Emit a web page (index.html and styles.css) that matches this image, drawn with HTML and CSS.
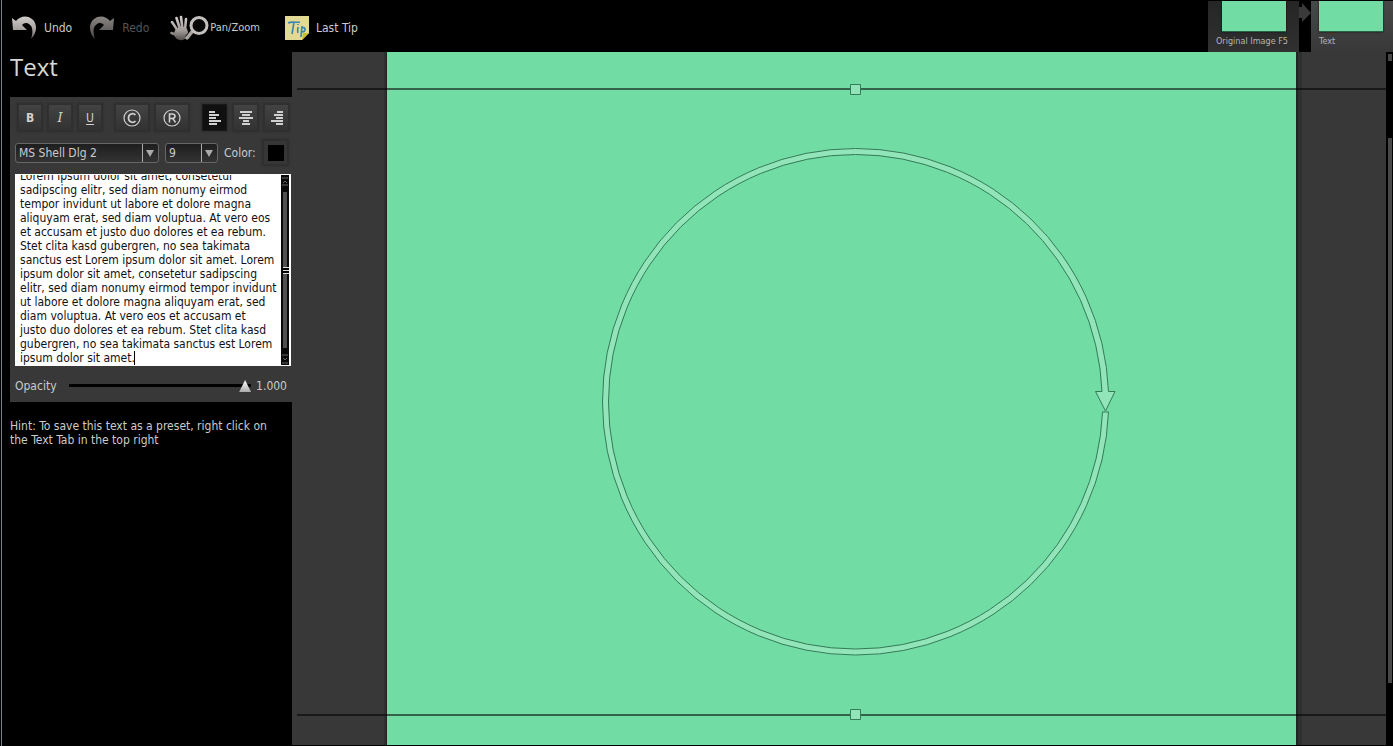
FILE: index.html
```html
<!DOCTYPE html>
<html lang="en">
<head>
<meta charset="utf-8">
<title>Text editor</title>
<link rel="stylesheet" href="styles.css">
</head>
<body>
<svg class="defs" width="0" height="0" aria-hidden="true">
  <defs>
    <linearGradient id="metal" gradientUnits="userSpaceOnUse" x1="0" y1="0" x2="0" y2="26"><stop offset="0" stop-color="#d5d2cf"/><stop offset=".6" stop-color="#a29c99"/><stop offset="1" stop-color="#4a4544"/></linearGradient>
    <linearGradient id="dim" x1="0" y1="0" x2="0" y2="1"><stop offset="0" stop-color="#8a8785"/><stop offset="1" stop-color="#4a4645"/></linearGradient>
  </defs>
</svg>
<header class="topbar">
  <nav class="tools">
    <button class="tool undo"><svg width="26" height="26" viewBox="0 0 26 26"><path fill="url(#metal)" d="M1 3l4 3C9 1 16 0 21 4c6 5 5 14-1 20 2-6 2-12-1-14-3-3-6-2-8 0l5 5H2z"/></svg>Undo</button>
    <button class="tool redo"><svg width="26" height="26" viewBox="0 0 26 26"><path fill="url(#dim)" d="M25 3l-4 3C17 1 10 0 5 4c-6 5-5 14 1 20-2-6-2-12 1-14 3-3 6-2 8 0l-5 5h14z"/></svg>Redo</button>
    <button class="tool pan"><svg width="39" height="27" viewBox="0 0 39 27"><path d="M2 7l6 9M6.500 3l3.500 11M11 2l1.500 12M16 4l-1 11M1.500 18l7 3" stroke="url(#metal)" stroke-width="2.600" stroke-linecap="round"/><path fill="url(#metal)" d="M6 14c3-2 8-3 11 0 1 3 2 5 0 8-2 4-9 4-11 1-2-2-3-5 0-9z"/><path d="M23 16l-6 7" stroke="#080808" stroke-width="5"/><path d="M23 15.500l-6 7.500" stroke="#aaa5a2" stroke-width="3.500" stroke-linecap="round"/><circle cx="29" cy="10.500" r="8" fill="#080808" stroke="#c4c0bd" stroke-width="3"/></svg>Pan/Zoom</button>
    <button class="tool tip"><svg width="24" height="24" viewBox="0 0 24 24"><path fill="#e2da94" d="M0 0h24v17l-7 7H0z"/><path fill="#c9bd28" d="M24 17h-6l-1 7z"/><path d="M3 7c4-2 8 0 12-1M9 7C8 10 8 14 7 18M13 11c0 2-1 4 0 6M13 8v1M17 10c0 4-1 7-1 11M17 12c4-2 4 4 0 4" fill="none" stroke="#3884b5" stroke-width="1.600"/></svg>Last Tip</button>
  </nav>
  <div class="stages">
    <button class="stage first"><span class="thumb"></span>Original Image F5</button>
    <svg class="step" width="12" height="51" viewBox="0 0 12 51" aria-hidden="true"><path fill="#3a3a3a" d="M0 6h3V2l9 10-9 9v-4H0z"/></svg>
    <button class="stage current"><span class="thumb"></span>Text</button>
  </div>
</header>
<div class="workspace">
  <aside class="sidebar">
    <h1 class="title">Text</h1>
    <section class="panel">
      <div class="formats">
        <div class="group">
          <button class="btn bold">B</button><button class="btn italic">I</button><button class="btn underline">U</button>
        </div>
        <div class="group">
          <button class="btn wide" aria-label="Copyright"><svg width="20" height="20" viewBox="0 0 20 20"><circle cx="10" cy="10" r="8" fill="none" stroke="#d0d0d0" stroke-width="1.200"/><path d="M13.500 7C11 4.500 6.500 6 6.500 10s4.500 5.500 7 3" fill="none" stroke="#d0d0d0" stroke-width="1.700"/></svg></button>
          <button class="btn wide" aria-label="Registered"><svg width="20" height="20" viewBox="0 0 20 20"><circle cx="10" cy="10" r="8" fill="none" stroke="#d0d0d0" stroke-width="1.200"/><path d="M7.500 14.500V6H10c4 0 4 4.500 0 4.500H8M10 10.500c1.500 0 2 2 3.500 4" fill="none" stroke="#d0d0d0" stroke-width="1.600"/></svg></button>
        </div>
        <div class="group">
          <button class="btn align active" aria-label="Align left"><svg width="14" height="14" viewBox="0 0 14 14"><path fill="#d0d0d0" d="M1 0h6v2H1zM1 3h10v2H1zM1 6h7v2H1zM1 9h12v2H1zM1 12h8v2H1z"/></svg></button>
          <button class="btn align" aria-label="Align center"><svg width="14" height="14" viewBox="0 0 14 14"><path fill="#d0d0d0" d="M1 0h12v2H1zM3 3h8v2H3zM0 6h14v2H0zM4 9h6v2H4zM3 12h8v2H3z"/></svg></button>
          <button class="btn align" aria-label="Align right"><svg width="14" height="14" viewBox="0 0 14 14"><path fill="#d0d0d0" d="M7 0h6v2H7zM4 3h9v2H4zM6 6h7v2H6zM1 9h12v2H1zM6 12h7v2H6z"/></svg></button>
        </div>
      </div>
      <div class="fontrow">
        <span class="combo family"><select aria-label="Font family"><option>MS Shell Dlg 2</option></select></span>
        <span class="combo size"><select aria-label="Font size"><option>9</option></select></span>
        <label class="color" for="color">Color:</label>
        <button class="swatch" id="color"><span class="chip"></span></button>
      </div>
      <div class="editor">
        <textarea class="text" id="text" aria-label="Text" spellcheck="false">Lorem ipsum dolor sit amet, consetetur
sadipscing elitr, sed diam nonumy eirmod
tempor invidunt ut labore et dolore magna
aliquyam erat, sed diam voluptua. At vero eos
et accusam et justo duo dolores et ea rebum.
Stet clita kasd gubergren, no sea takimata
sanctus est Lorem ipsum dolor sit amet. Lorem
ipsum dolor sit amet, consetetur sadipscing
elitr, sed diam nonumy eirmod tempor invidunt
ut labore et dolore magna aliquyam erat, sed
diam voluptua. At vero eos et accusam et
justo duo dolores et ea rebum. Stet clita kasd
gubergren, no sea takimata sanctus est Lorem
ipsum dolor sit amet.</textarea>
        <span class="caret"></span>
        <div class="scroll" aria-hidden="true">
          <svg width="8" height="12" viewBox="0 0 8 12"><path d="M1 3h6M2 8l2-2 2 2M1 10h6" fill="none" stroke="#666"/></svg>
          <span class="handle"><span class="grip"></span></span>
          <svg width="8" height="12" viewBox="0 0 8 12"><path d="M1 2h6M2 5l2 2 2-2M1 10h6" fill="none" stroke="#666"/></svg>
        </div>
      </div>
      <div class="opacity">
        <label for="opacity">Opacity</label>
        <input class="slider" id="opacity" type="range" min="0" max="1" step="0.001" value="1">
        <output for="opacity">1.000</output>
      </div>
    </section>
    <p class="hint">Hint: To save this text as a preset, right click on<br>the Text Tab in the top right</p>
  </aside>
  <main class="canvas">
    <svg class="art" viewBox="292 52 1094 693" preserveAspectRatio="xMidYMid slice">
      <path fill="#2f3030" d="M384 52h3v693h-3zM1296 52h6v693h-6z"/>
      <path fill="#1f2622" d="M386 52h1v693h-1zM1296 52h2v693h-2z"/>
      <path fill="#71dca3" d="M387 52h909v693H387z"/>
      <path fill="#000" fill-opacity=".55" d="M297 88h1089v2H297zM297 714h1089v2H297z"/>
      <g fill="#92e5b9" stroke="#347b58">
        <path d="M850.500 84.500h10v10h-10zM850.500 709.500h10v10h-10z"/>
        <path d="M1108.500 412A253 253 0 0 1 855.500 655A253 253 0 0 1 602.500 402A253 253 0 0 1 855.500 148.500A253 253 0 0 1 1108.500 391.500H1115L1105.500 411 1095.500 391.500H1102A247 247 0 0 0 855.500 154.500A247 247 0 0 0 608.500 402A247 247 0 0 0 855.500 649A247 247 0 0 0 1102.500 412z"/>
      </g>
    </svg>
  </main>
  <div class="vscroll" aria-hidden="true"><span class="vend"></span><span class="vthumb"></span></div>
</div>
<script src="script.js"></script>
</body>
</html>
```
FILE: styles.css
```css
* { box-sizing: border-box; }
html { background: #000; }
body {
  margin: 0;
  height: 100vh;
  display: flex;
  flex-direction: column;
  padding-bottom: 1px;
  background: #000;
  border-left: 1px solid #000;
  box-shadow: inset 1px 0 #a66b89;
  color: #cbcbcb;
  font: 12px/14px "DejaVu Sans Condensed", "DejaVu Sans", sans-serif;
  overflow: hidden;
}
button, select, textarea { font: inherit; color: inherit; border: 0; padding: 0; background: none; }
.defs { position: absolute; }
.topbar { display: flex; justify-content: space-between; height: 52px; flex: none; }
.tools { display: flex; align-items: center; padding: 4px 0 0 10px; gap: 17px; }
.tool { display: flex; align-items: center; gap: 7px; white-space: nowrap; }
.tool.redo { color: #555; }
.tool.pan { gap: 1px; font-size: 11px; margin-left: 4px; }
.tool.tip { margin-left: 8px; }
.stages { display: flex; padding-top: 1px; }
.stage { display: flex; flex-direction: column; align-items: flex-start; gap: 3px; padding: 0 8px; font-size: 9px; line-height: 12px; white-space: nowrap; background: linear-gradient(#262626, #303030); color: #b5b5b5; }
.stage.first { width: 91px; }
.stage.first .thumb { align-self: center; }
.stage.current { width: 82px; background: linear-gradient(#484848, #383838); }
.thumb { width: 64px; height: 31px; background: #71dca3; border-bottom: 1px solid #286044; box-shadow: 0 0 2px #111; }
.workspace { display: flex; flex: 1; min-height: 0; }
.sidebar { width: 291px; flex: none; padding-left: 9px; }
.title { margin: 0; height: 45px; font: 24px/30px "Open Sans", "Noto Sans", sans-serif; color: #d8d8d8; }
.panel { background: #383838; padding: 7px 1px 8px 5px; }
.formats { display: flex; justify-content: space-between; padding: 0 2px 0 3px; }
.group { display: flex; gap: 6px; }
.btn { display: grid; place-items: center; width: 24px; height: 27px; background: linear-gradient(#434343, #323232); border: 1px solid #303030; box-shadow: 0 0 2px 1px #2c2c2c; color: #d0d0d0; }
.wide { width: 34px; }
.align { width: 25px; }
.active { background: #101010; border-color: #191919; }
.bold { font-weight: bold; }
.italic { font: italic 13px/14px "DejaVu Serif", serif; }
.underline { text-decoration: underline; text-underline-offset: 2px; }
.fontrow { display: flex; align-items: center; height: 43px; }
.combo { position: relative; height: 20px; border: 1px solid #666; border-radius: 3px; background: linear-gradient(#1e1e1e, #333); }
.combo select { display: block; width: 100%; height: 100%; padding-left: 3px; appearance: none; outline: 0; }
.combo::before { content: ""; position: absolute; right: 15px; top: 0; bottom: 0; border-left: 1px solid #aaa; pointer-events: none; }
.combo::after { content: ""; position: absolute; right: 4px; top: 6px; border: solid transparent; border-width: 7px 4px 0; border-top-color: #aaa; pointer-events: none; }
.family { width: 144px; margin-right: 6px; }
.size { width: 53px; margin-right: 6px; }
.color { flex: 1; }
.swatch { display: grid; place-items: center; width: 25px; height: 25px; margin-right: 3px; background: #363636; border: 1px solid #2f2f2f; box-shadow: 0 0 2px 1px #2d2d2d; }
.chip { width: 16px; height: 16px; background: #000; }
.editor { position: relative; display: flex; height: 192px; padding: 1px 2px 1px 1px; background: #fff; color: #111; }
.text { flex: 1; min-width: 0; padding: 0 0 0 4px; resize: none; outline: 0; overflow: hidden; white-space: pre; }
.caret { position: absolute; left: 119px; bottom: 1px; width: 1px; height: 14px; background: #000; }
.scroll { width: 8px; background: #080808; display: flex; flex-direction: column; gap: 5px; justify-content: space-between; }
.handle { flex: 1; margin: 0 2px; background: #505050; display: grid; place-items: center; }
.grip { width: 6px; height: 7px; background: repeating-linear-gradient(#ddd 0 1px, #000 1px 3px); }
.opacity { display: flex; align-items: center; height: 28px; padding: 12px 4px 0 0; }
.slider { width: 182px; height: 14px; margin: 0 5px 0 auto; appearance: none; background: none; }
.slider::-webkit-slider-runnable-track { height: 12px; background: linear-gradient(transparent 4px, #000 4px 7px, transparent 7px); }
.slider::-webkit-slider-thumb { appearance: none; width: 12px; height: 12px; background: linear-gradient(#fff, #aaa); clip-path: polygon(50% 0, 100% 100%, 0 100%); }
.hint { margin: 17px 0 0; white-space: nowrap; }
.canvas { flex: 1; min-width: 0; background: #383838; }
.art { display: block; width: 100%; height: 100%; }
.vscroll { width: 7px; padding: 2px 1px 62px 2px; display: flex; flex-direction: column; justify-content: space-between; gap: 77px; }
.vend { height: 7px; background: #484848; }
.vthumb { flex: 1; background: #484848; }
```
FILE: script.js
```js
const text = document.getElementById("text");
text.scrollTop = text.scrollHeight;
```
